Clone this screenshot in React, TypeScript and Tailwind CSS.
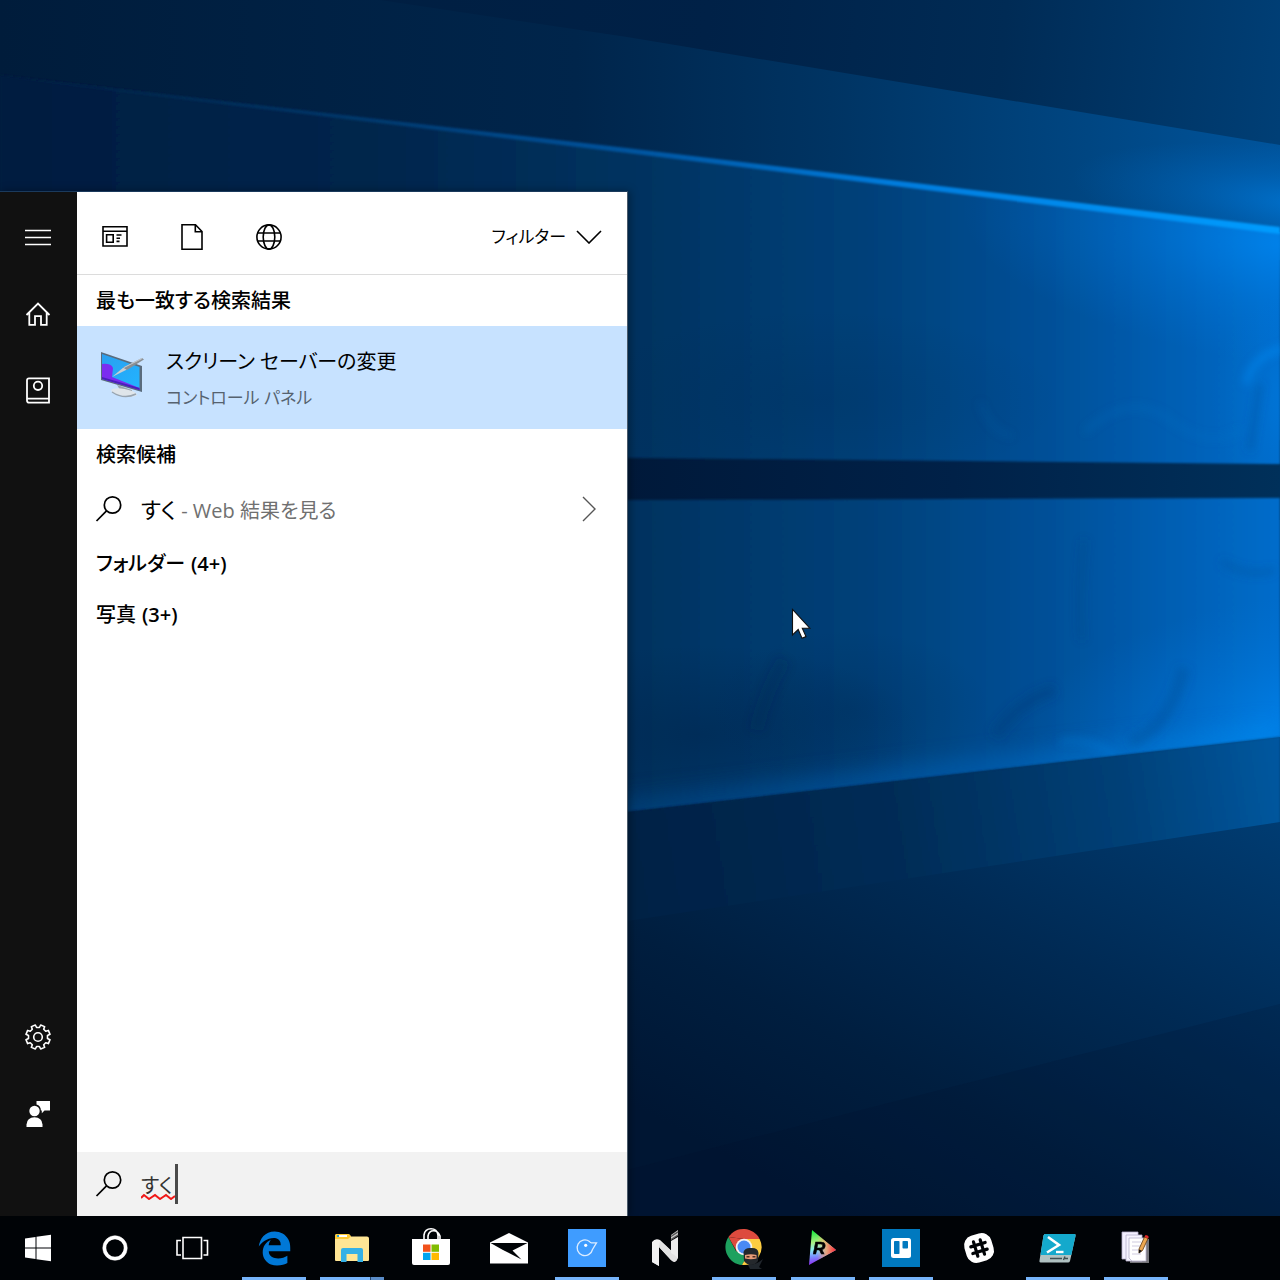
import { useState } from 'react'
import type { ReactNode } from 'react'
import { FaEdgeLegacy } from 'react-icons/fa6'

type TaskbarApp = {
  name: string
  icon: ReactNode
  running?: boolean
  stacked?: boolean
}

function Wallpaper() {
  return (
    <svg className="absolute inset-0 h-full w-full" viewBox="0 0 1280 1280" preserveAspectRatio="none" aria-hidden="true">
      <defs>
        <linearGradient id="sky" gradientUnits="userSpaceOnUse" x1="0" y1="0" x2="1280" y2="120">
          <stop offset="0" stopColor="#001c3c" />
          <stop offset="0.55" stopColor="#002147" />
          <stop offset="0.78" stopColor="#002b55" />
          <stop offset="1" stopColor="#003f76" />
        </linearGradient>
        <linearGradient id="upper" gradientUnits="userSpaceOnUse" x1="0" y1="0" x2="1280" y2="0">
          <stop offset="0" stopColor="#001c3b" />
          <stop offset="0.45" stopColor="#00254b" />
          <stop offset="0.65" stopColor="#003463" />
          <stop offset="0.85" stopColor="#004682" />
          <stop offset="1" stopColor="#00549c" />
        </linearGradient>
        <linearGradient id="pane" gradientUnits="userSpaceOnUse" x1="0" y1="0" x2="1280" y2="0">
          <stop offset="0" stopColor="#001d40" />
          <stop offset="0.3" stopColor="#00264d" />
          <stop offset="0.5" stopColor="#003360" />
          <stop offset="0.68" stopColor="#00417a" />
          <stop offset="0.82" stopColor="#005098" />
          <stop offset="0.92" stopColor="#005fb4" />
          <stop offset="1" stopColor="#006dcb" />
        </linearGradient>
        <linearGradient id="band" gradientUnits="userSpaceOnUse" x1="627" y1="0" x2="1280" y2="0">
          <stop offset="0" stopColor="#00193a" />
          <stop offset="0.5" stopColor="#002148" />
          <stop offset="1" stopColor="#00305a" />
        </linearGradient>
        <linearGradient id="sill" gradientUnits="userSpaceOnUse" x1="627" y1="840" x2="1280" y2="740">
          <stop offset="0" stopColor="#002145" />
          <stop offset="0.4" stopColor="#002c56" />
          <stop offset="0.75" stopColor="#004077" />
          <stop offset="1" stopColor="#0058a0" />
        </linearGradient>
        <linearGradient id="floor" gradientUnits="userSpaceOnUse" x1="1240" y1="800" x2="980" y2="1290">
          <stop offset="0" stopColor="#003c72" />
          <stop offset="0.4" stopColor="#002a54" />
          <stop offset="0.72" stopColor="#001e3f" />
          <stop offset="1" stopColor="#001633" />
        </linearGradient>
        <linearGradient id="beam" gradientUnits="userSpaceOnUse" x1="0" y1="0" x2="1280" y2="0">
          <stop offset="0" stopColor="#003260" stopOpacity="0" />
          <stop offset="0.3" stopColor="#003a70" />
          <stop offset="0.5" stopColor="#0055a0" />
          <stop offset="0.7" stopColor="#007cdd" />
          <stop offset="1" stopColor="#009cff" />
        </linearGradient>
        <linearGradient id="rim" gradientUnits="userSpaceOnUse" x1="627" y1="0" x2="1280" y2="0">
          <stop offset="0" stopColor="#004684" />
          <stop offset="0.5" stopColor="#0062b6" />
          <stop offset="1" stopColor="#008cf2" />
        </linearGradient>
        <radialGradient id="glow">
          <stop offset="0" stopColor="#0090ff" stopOpacity="0.8" />
          <stop offset="0.5" stopColor="#0084f0" stopOpacity="0.35" />
          <stop offset="1" stopColor="#0078e0" stopOpacity="0" />
        </radialGradient>
        <radialGradient id="shade">
          <stop offset="0" stopColor="#00234a" stopOpacity="0.6" />
          <stop offset="1" stopColor="#00234a" stopOpacity="0" />
        </radialGradient>
        <filter id="soft1"><feGaussianBlur stdDeviation="1" /></filter>
        <filter id="soft4" x="-20%" y="-20%" width="140%" height="140%"><feGaussianBlur stdDeviation="4" /></filter>
        <filter id="soft12" x="-50%" y="-100%" width="200%" height="300%"><feGaussianBlur stdDeviation="12" /></filter>
        <clipPath id="upperClip"><path d="M380 0L627 37L1280 145V232L627 150L0 75V0Z" /></clipPath>
        <clipPath id="topPane"><path d="M0 75L627 150L1280 232V464L0 452Z" /></clipPath>
        <clipPath id="lowPane"><path d="M0 502L1280 498V737L627 812L0 880Z" /></clipPath>
      </defs>

      <rect width="1280" height="1280" fill="url(#sky)" />
      <path d="M380 0L627 37L1280 145V260H0V0Z" fill="url(#upper)" />
      <g clipPath="url(#upperClip)">
        <ellipse cx="1310" cy="205" rx="240" ry="56" fill="url(#glow)" opacity="0.6" transform="rotate(7 1310 205)" />
      </g>

      <rect y="440" width="1280" height="80" fill="url(#band)" />
      <path d="M0 75L627 150L1280 232V464L0 452Z" fill="url(#pane)" filter="url(#soft1)" />
      <g clipPath="url(#topPane)">
        <ellipse cx="1290" cy="245" rx="330" ry="120" fill="url(#glow)" opacity="0.75" transform="rotate(7 1290 245)" />
        <ellipse cx="1300" cy="400" rx="90" ry="110" fill="url(#glow)" opacity="0.4" />
        <ellipse cx="820" cy="400" rx="240" ry="90" fill="url(#shade)" opacity="0.3" />
        <g fill="none" filter="url(#soft4)">
          <path d="M1284 348Q1252 356 1246 384" stroke="#0a8cf5" strokeWidth="6" opacity="0.6" />
          <path d="M1260 384L1250 450" stroke="#00509a" strokeWidth="5" opacity="0.5" />
          <path d="M1085 432Q1130 390 1170 420T1240 430" stroke="#1479cc" strokeWidth="4" opacity="0.3" />
          <path d="M980 402Q990 432 1012 436" stroke="#1470bc" strokeWidth="4" opacity="0.2" />
        </g>
      </g>
      <path d="M0 75L627 148L1280 227V234L627 153L0 77Z" fill="url(#beam)" filter="url(#soft1)" />

      <path d="M0 502L1280 498V737L627 812L0 880Z" fill="url(#pane)" filter="url(#soft1)" />
      <g clipPath="url(#lowPane)">
        <ellipse cx="1330" cy="720" rx="320" ry="130" fill="url(#glow)" opacity="0.75" transform="rotate(-6 1330 720)" />
        <ellipse cx="700" cy="735" rx="220" ry="90" fill="url(#shade)" opacity="0.8" />
        <ellipse cx="850" cy="710" rx="140" ry="80" fill="url(#shade)" opacity="0.4" />
        <path d="M600 815L1280 737" fill="none" stroke="url(#rim)" strokeWidth="22" opacity="0.75" filter="url(#soft12)" />
        <g fill="none" filter="url(#soft4)">
          <path d="M1084 540Q1078 600 1082 640" stroke="#004280" strokeWidth="5" opacity="0.35" />
          <path d="M1222 562Q1248 578 1275 570" stroke="#0054a0" strokeWidth="5" opacity="0.5" />
          <path d="M995 735Q1020 700 1055 690" stroke="#003d78" strokeWidth="12" opacity="0.35" />
          <path d="M1184 668Q1168 730 1130 742" stroke="#00509a" strokeWidth="12" opacity="0.4" />
          <path d="M1060 742Q1090 736 1115 756" stroke="#1288ea" strokeWidth="4" opacity="0.4" />
          <path d="M784 660Q766 690 756 730" stroke="#002650" strokeWidth="14" opacity="0.2" />
        </g>
      </g>

      <path d="M0 880L627 812L1280 737V1280H0Z" fill="url(#sill)" filter="url(#soft1)" />
      <path d="M0 1010L627 921L1280 822V1280H0Z" fill="url(#floor)" />
      <path d="M627 1170L900 1100L1280 1004V1280H627Z" fill="#00102a" opacity="0.15" />
    </svg>
  )
}

function SearchIcon() {
  return (
    <svg className="h-7 w-7 shrink-0" viewBox="0 0 28 28" fill="none" stroke="currentColor" strokeWidth="1.7" aria-hidden="true">
      <circle cx="17.5" cy="10" r="8.2" />
      <path d="M11.5 15.8L1.5 26" />
    </svg>
  )
}

// outline of a cog with eight teeth, centred on 14,14
const gearPath = (() => {
  const points: string[] = []
  const at = (deg: number, r: number) => {
    const a = (deg * Math.PI) / 180
    points.push(`${(14 + r * Math.cos(a)).toFixed(2)} ${(14 + r * Math.sin(a)).toFixed(2)}`)
  }
  for (let i = 0; i < 8; i++) {
    const mid = 22.5 + i * 45
    at(mid - 14, 9.6)
    at(mid - 10, 12.3)
    at(mid + 10, 12.3)
    at(mid + 14, 9.6)
  }
  return `M${points.join('L')}Z`
})()

const railTop = [
  {
    name: 'メニュー',
    icon: <path strokeWidth="1.5" d="M2 7.5h26M2 14.5h26M2 21.5h26" />,
  },
  {
    name: 'ホーム',
    icon: <path d="M3.5 15L15 3.6L26.5 15M6.3 12.8V24.8H12V16.2H18V24.8H23.7V12.8" />,
  },
  {
    name: 'ノートブック',
    icon: (
      <>
        <path d="M6 1.3H26V25.7H6.2Q4 25.7 4 23.5V3.3Q4 1.3 6 1.3ZM4.4 21.7H26" />
        <circle cx="15" cy="8.8" r="4.2" />
      </>
    ),
  },
]

const railBottom = [
  {
    name: '設定',
    icon: (
      <g transform="translate(1 0)" strokeLinejoin="round" strokeWidth="1.6">
        <path d={gearPath} />
        <circle cx="14" cy="14" r="4.3" />
      </g>
    ),
  },
  {
    name: 'フィードバック',
    icon: (
      <g fill="currentColor" stroke="none" transform="translate(1 0)">
        <circle cx="10.5" cy="11" r="5.2" />
        <path d="M2.5 27V24.5Q3 17.5 10.5 17.3Q18 17.5 18.5 24.5V27Z" />
        <path d="M12.5 1H26V10.5H20.5L17.8 13.2V10.5H16.9Q16.7 5.3 12.5 4.4Z" />
      </g>
    ),
  },
]

function RailButton({ name, icon }: { name: string; icon: ReactNode }) {
  return (
    <button aria-label={name} className="flex h-[77px] w-full items-center justify-center text-white hover:bg-white/10">
      <svg className="h-7 w-7" viewBox="2 0 28 28" fill="none" stroke="currentColor" strokeWidth="1.8">
        {icon}
      </svg>
    </button>
  )
}

const scopes = [
  {
    name: 'アプリ',
    icon: (
      <>
        <path d="M2 3.8H26V23H2ZM2 8.3H26M15.5 12H20.5M15.5 15.2H19M15.5 18.4H18.5" />
        <path d="M5.6 11.7H12.2V19.2H5.6Z" />
      </>
    ),
  },
  {
    name: 'ドキュメント',
    icon: <path d="M4 1.8H17.5L24 8.5V26.2H4ZM17.3 2V8.7H24" />,
  },
  {
    name: 'ウェブ',
    icon: (
      <>
        <circle cx="14" cy="14" r="12.1" />
        <ellipse cx="14" cy="14" rx="5.8" ry="12.1" />
        <path d="M2.7 10H25.3M2.7 18H25.3" />
      </>
    ),
  },
]

function ScreenSaverIcon() {
  return (
    <svg className="h-12 w-12 shrink-0" viewBox="1 1 48 48" aria-hidden="true">
      <defs>
        <linearGradient id="screen" x1="0" y1="0" x2="1" y2="1">
          <stop offset="0" stopColor="#2a9ff0" />
          <stop offset="1" stopColor="#22b4ff" />
        </linearGradient>
      </defs>
      <path d="M19 36L34 41V46L24 44Z" fill="#9aa3ab" />
      <ellipse cx="26" cy="43.5" rx="13" ry="3.6" fill="#dfe5ea" transform="rotate(10 26 43.5)" />
      <path d="M14 43Q26 51 38 45" fill="none" stroke="#98a4b0" strokeWidth="1.4" />
      <path d="M3 3L44 17V43L3 31Z" fill="#5a6b7c" />
      <path d="M4 5L41.5 18V40.5L4 30Z" fill="url(#screen)" />
      <path d="M4 15Q13 14 15 19L14 28L41.5 39V41L4 30Z" fill="#7b2cf0" />
      <path d="M4 28L41.5 39V41L4 30Z" fill="#4a20b8" />
      <path d="M14 28L26 18L29 20.5Z" fill="#c9ced3" />
      <path d="M25 18.5L44 9L46 10.5L29 21Z" fill="#8a8f94" />
      <path d="M26 18.5L44 9.5" stroke="#c7ccd0" strokeWidth="1" />
    </svg>
  )
}

const apps: TaskbarApp[] = [
  {
    name: 'Microsoft Edge',
    running: true,
    icon: <FaEdgeLegacy size={35} color="#0078d7" />,
  },
  {
    name: 'エクスプローラー',
    running: true,
    stacked: true,
    icon: (
      <svg width="38" height="38" viewBox="0 0 38 38">
        <path d="M2 7Q2 5 4 5H15Q17 5 18 7.5H34Q36 7.5 36 9.5V31Q36 32 35 32H3Q2 32 2 31Z" fill="#ffe695" />
        <path d="M2 7Q2 5 4 5H15Q17 5 18 7.5L15 10H2Z" fill="#ffcb34" />
        <path d="M4 7H14" stroke="#fff" strokeWidth="2" />
        <path d="M4 7H6" stroke="#2aa3dc" strokeWidth="2" />
        <path d="M8 33V21Q8 19 10 19H28Q30 19 30 21V33H24.5V25H13.5V33Z" fill="#35b1e6" />
      </svg>
    ),
  },
  {
    name: 'Microsoft Store',
    icon: (
      <svg width="40" height="40" viewBox="0 1 40 40">
        <path d="M13 13V8Q14 1.8 20 1.8T27 8V13M17 13V9Q18 3.8 22.5 3.8T29 9V13" fill="none" stroke="#fff" strokeWidth="1.6" />
        <path d="M1 12H39V36Q39 38 37 38H3Q1 38 1 36Z" fill="#fff" />
        <path d="M12 17.5H19.5V24.8H12Z" fill="#f1511b" />
        <path d="M20.5 17.5H28V24.8H20.5Z" fill="#80bb01" />
        <path d="M12 25.8H19.5V33H12Z" fill="#00a4ef" />
        <path d="M20.5 25.8H28V33H20.5Z" fill="#ffb901" />
      </svg>
    ),
  },
  {
    name: 'メール',
    icon: (
      <svg width="40" height="40" viewBox="0 0 40 40">
        <path d="M1 14.5L20 5L39 14.5V35.5H1Z" fill="#fff" />
        <path d="M1.5 15H38.5L23.5 22.5L32.5 31.5L14 22Z" fill="#000306" />
      </svg>
    ),
  },
  {
    name: 'バードクライアント',
    running: true,
    icon: (
      <svg width="38" height="38" viewBox="0 0 38 38">
        <rect width="38" height="38" fill="#3f9cff" />
        <path d="M23.5 13.8H28.5L24.5 20.5A7.8 7.8 0 1 1 21.5 12.5Q22.3 13.8 23.5 13.8Z" fill="none" stroke="#dcecff" strokeWidth="1.3" />
        <circle cx="17.7" cy="16.3" r="1.6" fill="#fff" />
      </svg>
    ),
  },
  {
    name: 'ノート',
    icon: (
      <svg width="38" height="38" viewBox="0 0 38 38">
        <path d="M5 13L12 17V37L5 33Z" fill="#d8d8d8" />
        <path d="M5 13Q8 9 13 11L31 28Q29 36 24 31L12 18V37L5 33Z" fill="#f2f2f2" />
        <path d="M12 18L24 31Q29 35 31 28L13 12Z" fill="#e2e2e2" />
        <path d="M24 6L31 1V6L24 11Z" fill="#c9c9c9" />
        <path d="M24 7.5L31 2.8M24 10.5L31 6" stroke="#555" strokeWidth="1.4" />
        <path d="M24 12L31 8V29Q28 26 24 24Z" fill="#ededed" />
      </svg>
    ),
  },
  {
    name: 'Google Chrome',
    running: true,
    icon: (
      <svg width="40" height="42" viewBox="0 0 40 42">
        <path d="M4.5 10A18 18 0 0 1 35.6 12H20Z" fill="#dd4b3e" />
        <path d="M4.5 10A18 18 0 0 0 18 38L26 25L12 24Z" fill="#1da15f" />
        <path d="M35.6 12A18 18 0 0 1 18 38L28 20L20 12Z" fill="#fecd41" />
        <path d="M4.5 10L13 25L20 12Z" fill="#dd4b3e" />
        <circle cx="20" cy="20" r="8.3" fill="#f4f4f4" />
        <circle cx="20" cy="20" r="6.5" fill="#4a8af4" />
        <path d="M19.5 25Q21 20.5 27 21Q34 20.5 34.5 26L34 34Q31 38 27 38T20 34Z" fill="#24282c" />
        <path d="M21 28Q27 26.5 32.5 28V31.5Q27 33 21 31.5Z" fill="#e89c78" />
        <path d="M22.5 29.8H25.5M28.5 29.8H31.5" stroke="#502d20" strokeWidth="1.5" />
        <path d="M24 38Q32 38 39 32L35 40L38 42H26Z" fill="#20262c" />
      </svg>
    ),
  },
  {
    name: 'Rlogin',
    running: true,
    icon: (
      <svg width="38" height="38" viewBox="1 1 38 38">
        <defs>
          <linearGradient id="tri" x1="0.2" y1="0" x2="0.3" y2="1">
            <stop offset="0" stopColor="#12e83a" />
            <stop offset="0.35" stopColor="#a8f080" />
            <stop offset="0.55" stopColor="#8af0f0" />
            <stop offset="0.75" stopColor="#7a90ff" />
            <stop offset="1" stopColor="#9020f0" />
          </linearGradient>
          <linearGradient id="triHot" x1="0" y1="0" x2="1" y2="0">
            <stop offset="0.3" stopColor="#ffb060" stopOpacity="0" />
            <stop offset="0.65" stopColor="#f0a070" stopOpacity="0.9" />
            <stop offset="1" stopColor="#ff2030" />
          </linearGradient>
        </defs>
        <path d="M9 2L33 22L6 37Z" fill="url(#tri)" />
        <path d="M9 2L33 22L6 37Z" fill="url(#triHot)" />
        <text x="10" y="26" fontFamily="Liberation Sans, sans-serif" fontWeight="700" fontStyle="italic" fontSize="17" fill="#000" stroke="#000" strokeWidth="0.6">R</text>
      </svg>
    ),
  },
  {
    name: 'Trello',
    running: true,
    icon: (
      <svg width="38" height="38" viewBox="0 0 38 38">
        <rect width="38" height="38" fill="#0079bf" />
        <rect x="9" y="9" width="20" height="20" rx="2.5" fill="#fff" />
        <rect x="12" y="12" width="5.5" height="13" rx="0.8" fill="#0079bf" />
        <rect x="20.5" y="12" width="5.5" height="7.5" rx="0.8" fill="#0079bf" />
      </svg>
    ),
  },
  {
    name: 'Slack',
    icon: (
      <svg width="38" height="38" viewBox="0 0 38 38">
        <rect x="5" y="5" width="28" height="28" rx="10" fill="#fff" transform="rotate(-17 19 19)" />
        <g stroke="#000306" strokeWidth="3.2" strokeLinecap="round" transform="rotate(-17 19 19)">
          <path d="M15.5 11.5V26.5M22.5 11.5V26.5M11.5 15.5H26.5M11.5 22.5H26.5" />
        </g>
      </svg>
    ),
  },
  {
    name: 'PowerShell ISE',
    running: true,
    icon: (
      <svg width="38" height="38" viewBox="1 0 38 38">
        <path d="M7 5H36.5Q38 5 37.5 7L32 32Q31.5 33.5 30 33.5H2.5Q1 33.5 1.500 31.5L5.5 6.5Q6 5 7 5Z" fill="#b0c2c2" />
        <path d="M7 5H36.5Q38 5 37.5 7L33.3 26H2.500L5.5 6.5Q6 5 7 5Z" fill="#14a9cc" />
        <path d="M10 8L21 16L9 23.5" fill="none" stroke="#fff" strokeWidth="2.6" />
        <path d="M18 23H25.5" stroke="#fff" strokeWidth="2.4" />
        <path d="M12 29.5H24M25.5 31L27 27.5M27 29.5H30" stroke="#3d4f52" strokeWidth="1.4" />
      </svg>
    ),
  },
  {
    name: 'サクラエディタ',
    running: true,
    icon: (
      <svg width="38" height="38" viewBox="0 0 38 38">
        <path d="M10 10H32V34H13V32H10Z" fill="#77777c" />
        <path d="M5 3H21V30H5Z" fill="#f3f0ff" stroke="#b6b0cc" strokeWidth="0.8" />
        <path d="M9 6H25V32H9Z" fill="#f6f4ff" stroke="#b6b0cc" strokeWidth="0.8" />
        <path d="M12 9H29V32H15L12 29Z" fill="#fff" stroke="#b6b0cc" strokeWidth="0.8" />
        <path d="M15 13H24M15 17H23M15 21H22M15 25H24" stroke="#cfcbe0" strokeWidth="1.2" />
        <path d="M22 20L27.5 8L31 9.5L25.5 21.5L22 24Z" fill="#eda750" stroke="#5d3710" strokeWidth="0.8" />
        <path d="M27.5 8L28.5 6Q31 6 31.8 8L31 9.5Z" fill="#e02828" />
        <path d="M22 20.5L25 21.8L21.8 24.5Z" fill="#161616" />
      </svg>
    ),
  },
]

function Taskbar() {
  return (
    <nav aria-label="タスクバー" className="relative flex h-16 shrink-0 bg-[#000306]">
      <button aria-label="スタート" className="flex w-[77px] items-center justify-center">
        <svg width="28" height="28" viewBox="1 0 28 28" fill="#fff">
          <path d="M1 4.5L11.5 3V13.5H1ZM12.5 2.8L27 0.8V13.5H12.5ZM1 14.5H11.5V25L1 23.5ZM12.5 14.5H27V27.2L12.5 25.2Z" />
        </svg>
      </button>
      <button aria-label="Cortana" className="flex w-[77px] items-center justify-center">
        <svg width="28" height="28" viewBox="1 0 28 28" fill="none" stroke="#fff">
          <circle cx="14" cy="14" r="10.5" strokeWidth="3.4" />
          <circle cx="14" cy="14" r="12.3" strokeWidth="1" opacity="0.5" />
        </svg>
      </button>
      <button aria-label="タスク ビュー" className="mr-[11px] flex w-[77px] items-center justify-center">
        <svg width="34" height="28" viewBox="1 0 34 28" fill="none" stroke="#fff" strokeWidth="1.6">
          <path d="M8 3.5H26.5V24.5H8ZM6 6.5H2V21H6M28.5 6.5H32.5V21H28.5" />
        </svg>
      </button>
      <ul className="flex w-[926px] justify-between">
        {apps.map((app) => (
          <li key={app.name}>
            <button aria-label={app.name} className="relative flex h-16 w-16 items-center justify-center hover:bg-white/10">
              {app.icon}
              {app.running && (
                <span className="absolute inset-x-0 bottom-0 flex h-[3px] bg-[#76b4fa]">
                  {app.stacked && <span className="ml-auto w-3.5 border-l border-[#24466e] bg-[#5a8cc8]" />}
                </span>
              )}
            </button>
          </li>
        ))}
      </ul>
    </nav>
  )
}

function SectionTitle({ children, count }: { children: ReactNode; count?: string }) {
  return (
    <h2 className="flex h-[51px] items-center gap-1.5 px-[19px] text-xl leading-7 font-medium">
      {children}
      {count && <span className="font-semibold">{count}</span>}
    </h2>
  )
}

function SearchPanel() {
  const [query, setQuery] = useState('すく')

  return (
    <main className="flex min-w-0 flex-1 flex-col bg-white text-black">
      <header className="flex h-[83px] items-center border-b border-[#dcdcdc] pt-2">
        {scopes.map((scope) => (
          <button key={scope.name} aria-label={scope.name} className="flex h-full w-[77px] items-center justify-center">
            <svg className="h-7 w-7" viewBox="1 0 28 28" fill="none" stroke="currentColor" strokeWidth="1.6">
              {scope.icon}
            </svg>
          </button>
        ))}
        <button className="mr-[25px] ml-auto flex items-center gap-2.5 text-[17px]">
          フィルター
          <svg width="26" height="14" viewBox="0 0 26 14" fill="none" stroke="currentColor" strokeWidth="1.6">
            <path d="M1 1L13 13L25 1" />
          </svg>
        </button>
      </header>

      <section>
        <SectionTitle>最も一致する検索結果</SectionTitle>
        <a href="#screensaver" className="flex h-[103px] items-start bg-[#c7e2ff] pt-6 pl-[22px]">
          <ScreenSaverIcon />
          <span className="ml-[19px]">
            <span className="block text-xl leading-6">スクリーン セーバーの変更</span>
            <span className="mt-3 block text-[17px] leading-6 text-[#56626f]">コントロール パネル</span>
          </span>
        </a>
      </section>

      <section>
        <SectionTitle>検索候補</SectionTitle>
        <a href="#web" className="flex h-[58px] items-center pr-[30px] pl-[18px]">
          <SearchIcon />
          <span className="ml-[18px] text-[22px] leading-8">
            すく<span className="text-xl text-[#707070]"> - Web 結果を見る</span>
          </span>
          <svg className="ml-auto" width="16" height="26" viewBox="0 0 16 26" fill="none" stroke="#555" strokeWidth="1.4">
            <path d="M2 1L14 13L2 25" />
          </svg>
        </a>
      </section>

      <SectionTitle count="(4+)">フォルダー</SectionTitle>
      <SectionTitle count="(3+)">写真</SectionTitle>

      <div className="mt-auto flex h-16 items-center bg-[#f2f2f2] pl-[18px]">
        <SearchIcon />
        <div className="relative ml-[18px] flex-1">
          <input
            type="text"
            aria-label="検索"
            value={query}
            onChange={(e) => setQuery(e.target.value)}
            className="block h-12 w-full bg-transparent text-xl text-[#333] outline-none"
          />
          {/* spelling mark and caret */}
          <svg className="absolute top-8 left-0" width="34" height="8" viewBox="0 0 34 8" fill="none" stroke="#f01818" strokeWidth="2" aria-hidden="true">
            <path d="M0 6L3 3L8 7L14 3L19 7L25 3L30 7L34 4" />
          </svg>
          <span className="absolute top-1 left-[34px] h-10 w-[3px] bg-[#4a4a4a]" />
        </div>
      </div>
    </main>
  )
}

export default function App() {
  return (
    <div className="relative flex h-screen flex-col overflow-hidden bg-[#001c3c] font-['Open_Sans','Noto_Sans_CJK_JP',sans-serif] [font-feature-settings:'palt']">
      <Wallpaper />

      <div className="relative flex min-h-0 flex-1 pt-[191px]">
        <div className="flex w-[628px] max-w-full border-t border-r border-t-[#1b3a5c] border-r-[#4a5a6a] shadow-[2px_0_8px_rgba(0,0,0,0.35)]">
          <aside className="flex w-[77px] shrink-0 flex-col bg-[#111] pt-1.5 pb-16">
            {railTop.map((item) => (
              <RailButton key={item.name} {...item} />
            ))}
            <div className="mt-auto">
              {railBottom.map((item) => (
                <RailButton key={item.name} {...item} />
              ))}
            </div>
          </aside>
          <SearchPanel />
        </div>
      </div>

      <Taskbar />

      {/* mouse pointer */}
      <svg className="absolute top-[608px] left-[791px]" width="22" height="32" viewBox="0 0 22 32" aria-hidden="true">
        <path d="M1.5 1.5V27L7.2 21.5L11 30.3L15 28.6L11.3 20.2H18.8Z" fill="#fff" stroke="#111" strokeWidth="1.1" />
      </svg>
    </div>
  )
}
